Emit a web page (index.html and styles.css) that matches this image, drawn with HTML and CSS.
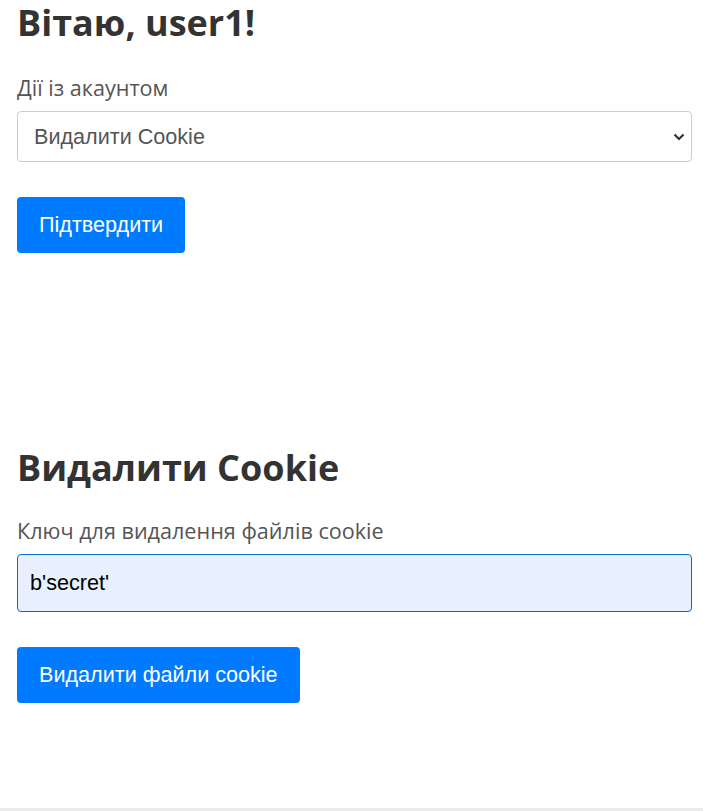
FILE: index.html
```html
<!DOCTYPE html>
<html lang="uk">
<head>
<meta charset="utf-8">
<title>Вітаю</title>
<link rel="stylesheet" href="styles.css">
</head>
<body>
<div class="page">
  <form class="section section-account">
    <h1 class="title">Вітаю, user1!</h1>
    <label class="label" for="action">Дії із акаунтом</label>
    <div class="select-wrap">
      <select id="action" class="select">
        <option>Видалити Cookie</option>
      </select>
      <svg class="chevron" width="12" height="8" viewBox="0 0 12 8"><path d="M1.5 1.5 L6 6 L10.5 1.5" fill="none" stroke="#333" stroke-width="2.2"/></svg>
    </div>
    <button type="button" class="btn">Підтвердити</button>
  </form>
  <form class="section section-cookie">
    <h2 class="title">Видалити Cookie</h2>
    <label class="label label-key" for="key">Ключ для видалення файлів cookie</label>
    <input id="key" class="input" type="text" value="b'secret'">
    <button type="button" class="btn">Видалити файли cookie</button>
  </form>
</div>
</body>
</html>
```

FILE: styles.css
```css
html, body {
  margin: 0;
  padding: 0;
}
body {
  background: #ececec;
}
.page {
  background: #fff;
  height: 808px;
  box-sizing: border-box;
  padding: 1px 11px 0 17px;
}
.section {
  display: flex;
  flex-direction: column;
  align-items: flex-start;
}
.section-cookie {
  margin-top: 193px;
}
.title {
  font-family: "Open Sans", sans-serif;
  font-weight: 700;
  font-size: 36px;
  line-height: 43px;
  color: #333;
  margin: 0;
}
.label {
  font-family: "Open Sans", sans-serif;
  font-size: 21.6px;
  line-height: 29px;
  color: #555;
  margin-top: 29px;
  margin-bottom: 9px;
}
.label-key {
  margin-top: 27px;
  margin-bottom: 9px;
}
.select-wrap {
  position: relative;
  align-self: stretch;
  margin-bottom: 35px;
}
.select {
  appearance: none;
  -webkit-appearance: none;
  display: block;
  width: 100%;
  height: 51px;
  box-sizing: border-box;
  border: 1px solid #ccc;
  border-radius: 4px;
  background: #fff;
  padding: 0 40px 0 16px;
  font-family: "Liberation Sans", Arial, sans-serif;
  font-size: 21.6px;
  color: #555;
  outline: none;
}
.chevron {
  position: absolute;
  right: 7px;
  top: 22px;
  pointer-events: none;
}
.input {
  align-self: stretch;
  height: 58px;
  box-sizing: border-box;
  border: 1px solid #0a66d0;
  border-radius: 4px;
  background: #e8f0fe;
  padding: 0 12px;
  font-family: "Liberation Sans", Arial, sans-serif;
  font-size: 21.6px;
  color: #000;
  margin-bottom: 35px;
  outline: none;
}
.btn {
  height: 56px;
  box-sizing: border-box;
  border: none;
  border-radius: 4px;
  background: #007bff;
  color: #fff;
  font-family: "Liberation Sans", Arial, sans-serif;
  font-size: 21.6px;
  padding: 0 22px;
  cursor: pointer;
}
```
